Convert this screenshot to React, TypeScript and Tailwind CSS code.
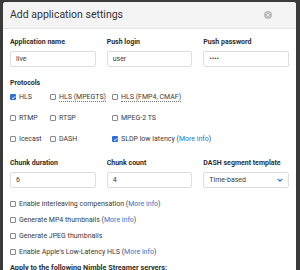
import React from "react";

const Box = ({ checked }: { checked?: boolean }) =>
  checked ? (
    <span className="w-[6px] h-[6px] rounded-[1px] bg-[#2f6fd1] flex items-center justify-center shrink-0">
      <svg width="5" height="5" viewBox="0 0 10 10">
        <path d="M1.8 5.2 L4.2 7.5 L8.4 2.6" stroke="#fff" strokeWidth="2" fill="none" />
      </svg>
    </span>
  ) : (
    <span className="w-[6px] h-[6px] rounded-[1px] border border-[#8a8a8a] bg-white shrink-0" />
  );

const More = () => (
  <>
    {" "}(<span className="text-[#2a78c6]">More info</span>)
  </>
);

const Check = ({
  label,
  checked,
  dotted,
  more,
}: {
  label: string;
  checked?: boolean;
  dotted?: boolean;
  more?: boolean;
}) => (
  <div className="flex items-center gap-[3px] whitespace-nowrap h-[10px]">
    <Box checked={checked} />
    <span>
      <span className={dotted ? "border-b border-dotted border-[#777]" : ""}>{label}</span>
      {more && <More />}
    </span>
  </div>
);

const Label = ({ children }: { children: React.ReactNode }) => (
  <div className="font-bold text-[7px] leading-[10px] text-[#2e2e2e] whitespace-nowrap">{children}</div>
);

const Field = ({ label, value }: { label: string; value: string }) => (
  <div className="flex flex-col gap-[4px]">
    <Label>{label}</Label>
    <div className="h-[16px] border border-[#dedede] rounded-[2px] bg-white px-[5px] flex items-center text-[7px] text-[#3a3a3a]">
      {value}
    </div>
  </div>
);

export default function App() {
  return (
    <div
      className="w-[300px] h-[270px] bg-[#3a3a3a] pt-[2px] pl-[3px] pr-[4px] overflow-hidden"
      style={{ fontFamily: 'Roboto, "Liberation Sans", sans-serif' }}
    >
      <div className="bg-white h-full rounded-t-[3px] overflow-hidden text-[#333]">
        {/* header */}
        <div className="h-[27px] bg-[#f4f4f4] border-b border-[#e3e3e3] flex items-center justify-between pl-[7px] pr-[24px]">
          <div className="text-[10.5px] text-[#333]">Add application settings</div>
          <div className="w-[8px] h-[8px] rounded-full bg-[#bdbdbd] flex items-center justify-center">
            <svg width="4" height="4" viewBox="0 0 8 8">
              <path d="M1 1 L7 7 M7 1 L1 7" stroke="#f4f4f4" strokeWidth="1.6" />
            </svg>
          </div>
        </div>

        {/* body */}
        <div className="px-[7px] pt-[8px]">
          <div className="grid grid-cols-3 gap-x-[11px]">
            <Field label="Application name" value="live" />
            <Field label="Push login" value="user" />
            <Field label="Push password" value="••••" />
          </div>

          <div className="mt-[11px]">
            <Label>Protocols</Label>
          </div>
          <div className="grid grid-cols-[40px_62px_1fr] gap-y-[11px] text-[7px] text-[#3a3a3a] mt-[4px]">
            <Check label="HLS" checked />
            <Check label="HLS (MPEGTS)" dotted />
            <Check label="HLS (FMP4, CMAF)" dotted />
            <Check label="RTMP" />
            <Check label="RTSP" />
            <Check label="MPEG-2 TS" />
            <Check label="Icecast" />
            <Check label="DASH" />
            <Check label="SLDP low latency" checked more />
          </div>

          <div className="grid grid-cols-3 gap-x-[11px] mt-[14px]">
            <Field label="Chunk duration" value="6" />
            <Field label="Chunk count" value="4" />
            <div className="flex flex-col gap-[4px]">
              <Label>DASH segment template</Label>
              <div className="h-[16px] border border-[#dedede] rounded-[2px] bg-white px-[5px] flex items-center justify-between text-[7px] text-[#3a3a3a]">
                <span>Time-based</span>
                <svg width="6" height="4" viewBox="0 0 8 5">
                  <path d="M1 1 L4 4 L7 1" stroke="#2a78c6" strokeWidth="1.6" fill="none" />
                </svg>
              </div>
            </div>
          </div>

          <div className="flex flex-col gap-[6px] text-[7px] text-[#3a3a3a] mt-[11px]">
            <Check label="Enable interleaving compensation" more />
            <Check label="Generate MP4 thumbnails" more />
            <Check label="Generate JPEG thumbnails" />
            <Check label="Enable Apple's Low-Latency HLS" more />
          </div>

          <div className="mt-[6px] font-bold text-[7.3px] leading-[10px] text-[#2e2e2e] whitespace-nowrap">
            Apply to the following Nimble Streamer servers:
          </div>
        </div>
      </div>
    </div>
  );
}
